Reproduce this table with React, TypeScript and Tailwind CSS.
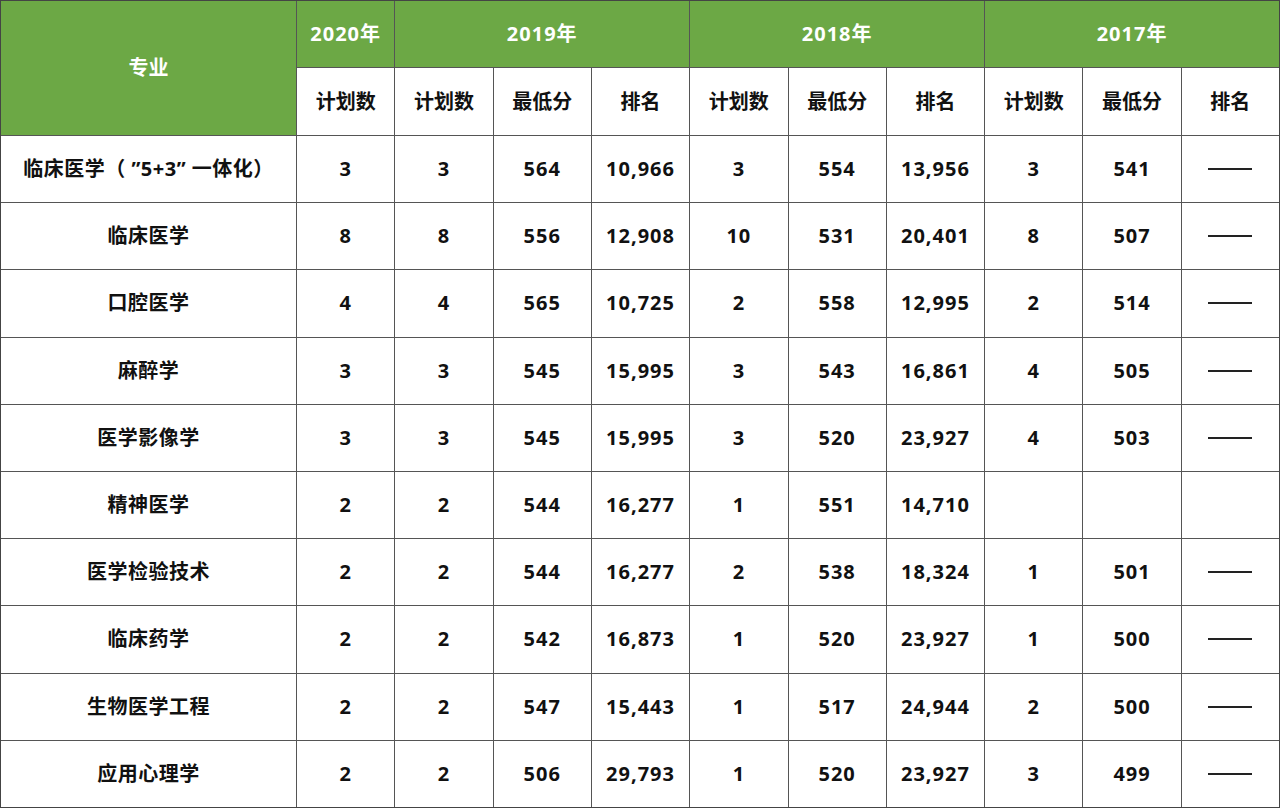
import React from "react";

type Row = {
  name: string;
  cells: string[];
};

const rows: Row[] = [
  { name: "临床医学（ ”5+3” 一体化）", cells: ["3", "3", "564", "10,966", "3", "554", "13,956", "3", "541", "—"] },
  { name: "临床医学", cells: ["8", "8", "556", "12,908", "10", "531", "20,401", "8", "507", "—"] },
  { name: "口腔医学", cells: ["4", "4", "565", "10,725", "2", "558", "12,995", "2", "514", "—"] },
  { name: "麻醉学", cells: ["3", "3", "545", "15,995", "3", "543", "16,861", "4", "505", "—"] },
  { name: "医学影像学", cells: ["3", "3", "545", "15,995", "3", "520", "23,927", "4", "503", "—"] },
  { name: "精神医学", cells: ["2", "2", "544", "16,277", "1", "551", "14,710", "", "", ""] },
  { name: "医学检验技术", cells: ["2", "2", "544", "16,277", "2", "538", "18,324", "1", "501", "—"] },
  { name: "临床药学", cells: ["2", "2", "542", "16,873", "1", "520", "23,927", "1", "500", "—"] },
  { name: "生物医学工程", cells: ["2", "2", "547", "15,443", "1", "517", "24,944", "2", "500", "—"] },
  { name: "应用心理学", cells: ["2", "2", "506", "29,793", "1", "520", "23,927", "3", "499", "—"] },
];

const subHeads = ["计划数", "计划数", "最低分", "排名", "计划数", "最低分", "排名", "计划数", "最低分", "排名"];

const font = { fontFamily: '"Open Sans", "Noto Sans CJK SC", sans-serif' };

export default function App() {
  return (
    <div
      style={font}
      className="grid h-[808px] w-[1280px] grid-cols-[295px_repeat(10,minmax(0,1fr))] grid-rows-[66px_67px_repeat(10,minmax(0,1fr))] gap-px border border-[#444] bg-[#555] text-[20px] font-bold text-[#111]"
    >
      <div className="row-span-2 flex items-center justify-center bg-[#6ca845] text-white">专业</div>
      <div className="flex items-center justify-center bg-[#6ca845] tracking-[1px] text-white">2020年</div>
      <div className="col-span-3 flex items-center justify-center bg-[#6ca845] tracking-[1px] text-white">2019年</div>
      <div className="col-span-3 flex items-center justify-center bg-[#6ca845] tracking-[1px] text-white">2018年</div>
      <div className="col-span-3 flex items-center justify-center bg-[#6ca845] tracking-[1px] text-white">2017年</div>

      {subHeads.map((h, i) => (
        <div key={`h${i}`} className="flex items-center justify-center bg-white">
          {h}
        </div>
      ))}

      {rows.map((row) => (
        <React.Fragment key={row.name}>
          <div className="flex items-center justify-center whitespace-nowrap bg-white tracking-[0.5px]">
            {row.name}
          </div>
          {row.cells.map((c, i) => (
            <div key={i} className="flex items-center justify-center bg-white tracking-[1px]">
              {c === "—" ? <span className="block h-[2px] w-[44px] bg-[#222]" /> : c}
            </div>
          ))}
        </React.Fragment>
      ))}
    </div>
  );
}
